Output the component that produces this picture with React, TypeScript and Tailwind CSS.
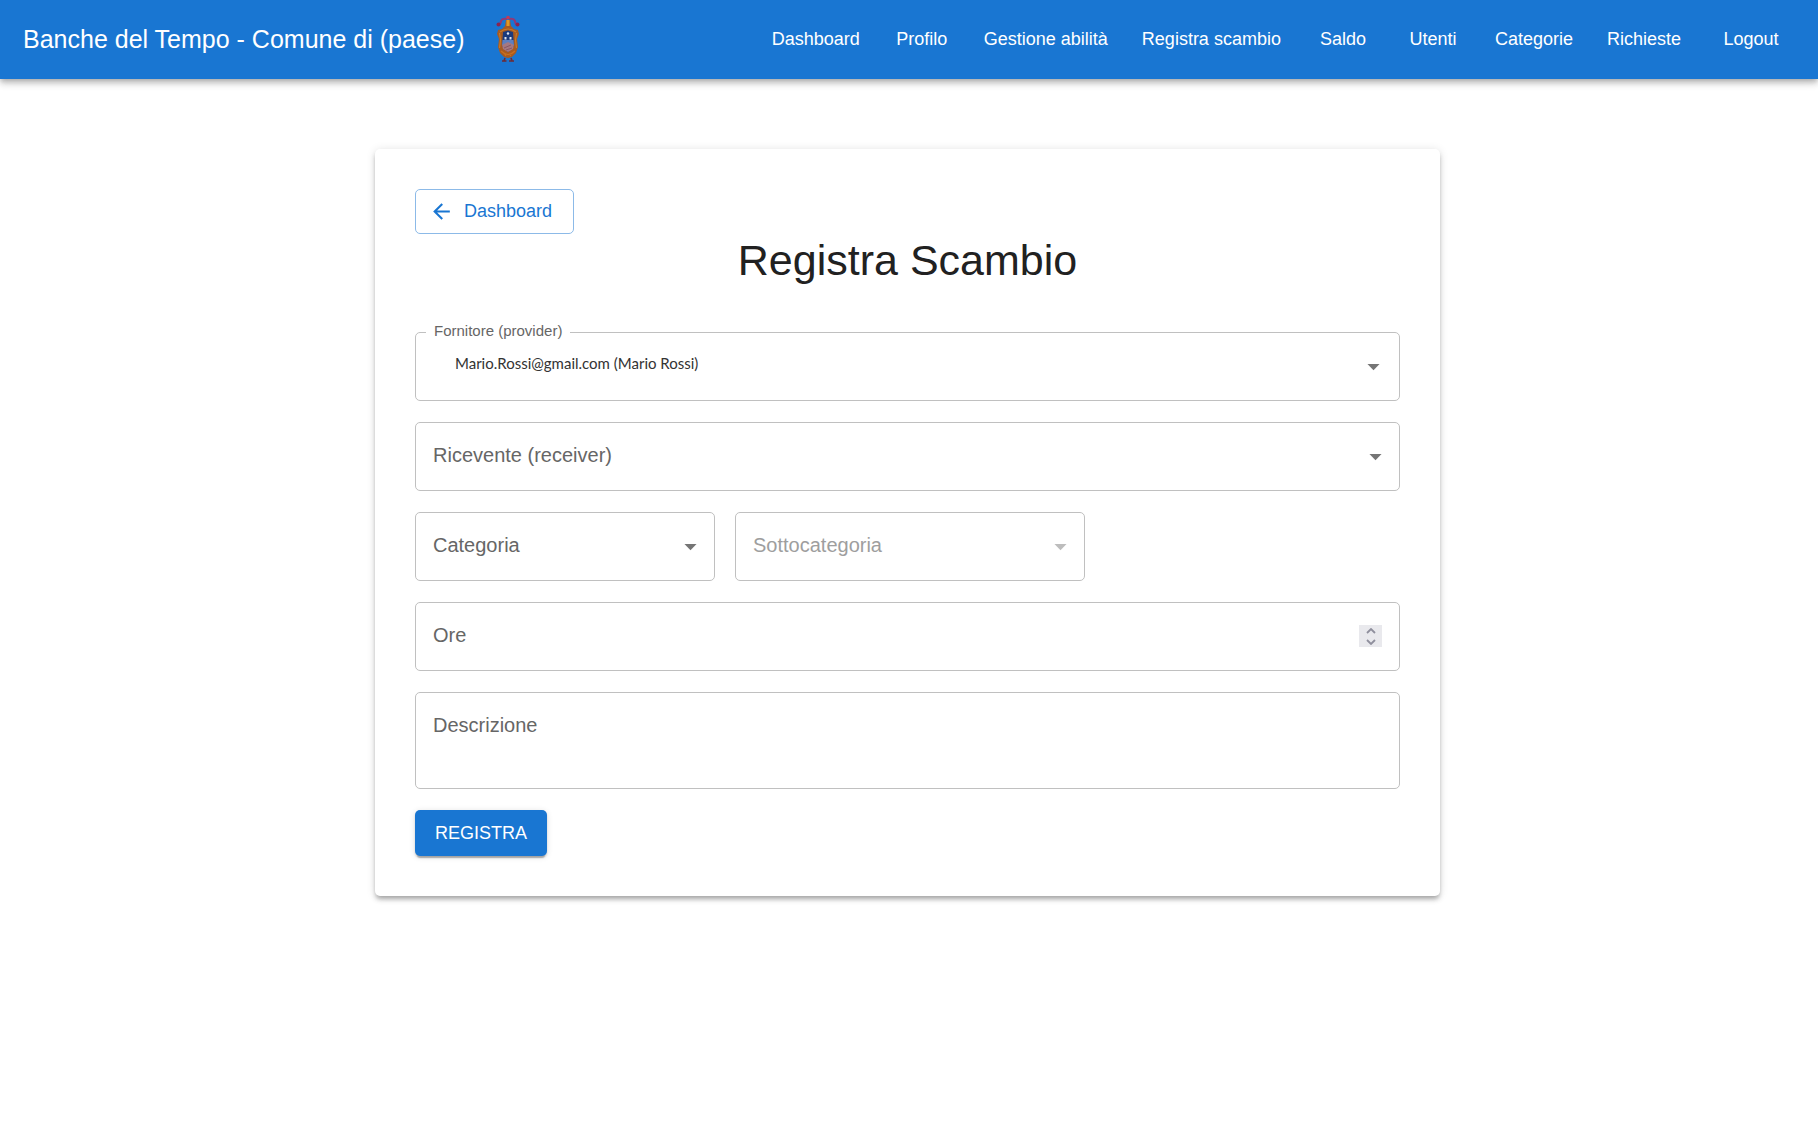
import { useState } from 'react';
import type { ReactNode } from 'react';

const navItems = [
  'Dashboard',
  'Profilo',
  'Gestione abilità',
  'Registra scambio',
  'Saldo',
  'Utenti',
  'Categorie',
  'Richieste',
];

const fieldClass =
  'block w-full rounded-[5px] border border-[#c0c0c0] bg-white text-[20px] leading-7 text-[#212121] outline-none focus:border-[#1976d2]';

// Municipal coat of arms
const Emblem = () => (
  <svg viewBox="0 0 24 48" className="h-12 w-6" role="img" aria-label="Stemma del comune">
    {/* Ribbon */}
    <path d="M11 4 Q6 3 5 6 Q5 9 2 10" stroke="#8f3a78" strokeWidth="2" fill="none" />
    <path d="M13 4 Q18 3 19 6 Q19 9 22 10" stroke="#8f3a78" strokeWidth="2" fill="none" />
    <circle cx="2.500" cy="9.500" r="2" fill="#8a2450" />
    <circle cx="21.500" cy="9.500" r="2" fill="#8a2450" />
    <circle cx="12" cy="2.500" r="1.800" fill="#c43a55" />
    {/* Gilded frame */}
    <path d="M10 5 L14 5 L15 11 L18 14 L22 15 L23 19 L21 24 L22 32 L20 38 L16 42 L12 43 L8 42 L4 38 L2 32 L3 24 L1 19 L2 15 L6 14 L9 11 Z" fill="#a65a22" />
    <path d="M10.500 5 L13.500 5 L13.500 11 L10.500 11 Z" fill="#e09a24" />
    <path d="M4 17 Q12 11 20 17 M3.500 18 L4.500 25 L3.500 33 M20.500 18 L19.500 25 L20.500 33" stroke="#c67a26" strokeWidth="1.200" fill="none" />
    <path d="M5 36 Q12 43 19 36 M8 38 L10 41 M16 38 L14 41" stroke="#c9701f" strokeWidth="1.200" fill="none" />
    {/* Shield */}
    <path d="M7 17 L12 15.500 L17 17 L18 31 L12 37 L6 31 Z" fill="#1b3a7c" />
    <path d="M6.500 25 H17.500 L18 30 H6 Z" fill="#5f7fc0" />
    <path d="M6 30 L12 27 L18 30 L17 34 L12 37 L7 34 Z" fill="#a57882" />
    <path d="M8 33 L15 30 M10 35 L16 33" stroke="#80505f" strokeWidth="0.800" />
    <circle cx="12" cy="18.500" r="1.200" fill="#dfe4ee" />
    <rect x="8.500" y="22" width="2" height="2.500" fill="#dfe4ee" />
    <rect x="13.500" y="22" width="2" height="2.500" fill="#dfe4ee" />
    {/* Foot */}
    <path d="M6 46 H10.500 M13 46 H18 M9 43 L8 46 M15 43 L16 46" stroke="#6e2a35" strokeWidth="1.600" />
  </svg>
);

const DropdownArrow = ({ className }: { className: string }) => (
  <svg viewBox="0 0 24 24" className={`pointer-events-none absolute top-5 size-[29px] ${className}`}>
    <path d="M7 10l5 5 5-5z" />
  </svg>
);

const PlaceholderLabel = ({ htmlFor, disabled, children }: { htmlFor: string; disabled?: boolean; children: ReactNode }) => (
  <label
    htmlFor={htmlFor}
    className={`pointer-events-none absolute left-[18px] top-[19px] text-[20px] leading-7 ${disabled ? 'text-[#9e9e9e]' : 'text-[#666666]'}`}
  >
    {children}
  </label>
);

type SelectFieldProps = {
  id: string;
  label: string;
  options?: string[];
  disabled?: boolean;
  className?: string;
};

function SelectField({ id, label, options = [], disabled, className = '' }: SelectFieldProps) {
  const [value, setValue] = useState('');
  return (
    <div className={`relative ${className}`}>
      <select
        id={id}
        value={value}
        disabled={disabled}
        onChange={(e) => setValue(e.target.value)}
        className={`${fieldClass} h-[69px] appearance-none pl-4 pr-12`}
      >
        <option value="" />
        {options.map((o) => (
          <option key={o}>{o}</option>
        ))}
      </select>
      {!value && (
        <PlaceholderLabel htmlFor={id} disabled={disabled}>
          {label}
        </PlaceholderLabel>
      )}
      <DropdownArrow className={disabled ? 'right-[10px] fill-[#bdbdbd]' : 'right-[10px] fill-[#757575]'} />
    </div>
  );
}

function Header() {
  return (
    <header className="flex min-h-[79px] items-center justify-between bg-[#1976d2] pb-0.5 pl-[23px] pr-7 text-white shadow-[0_2px_5px_-1px_rgba(0,0,0,0.2),0_5px_6px_0_rgba(0,0,0,0.14),0_1px_12px_0_rgba(0,0,0,0.12)]">
      <div className="flex items-center gap-8">
        <span className="text-[25px] leading-10">Banche del Tempo - Comune di (paese)</span>
        <Emblem />
      </div>
      <nav className="flex items-center gap-3 text-[18px] leading-8">
        {navItems.map((item) => (
          <a key={item} href="#" className="min-w-[78px] px-[11px] text-center">
            {item}
          </a>
        ))}
        <button type="button" className="ml-2 min-w-[78px] px-[11px] text-center">
          Logout
        </button>
      </nav>
    </header>
  );
}

export default function App() {
  const [ore, setOre] = useState('');
  const [descrizione, setDescrizione] = useState('');

  const step = (delta: number) => setOre(String(Math.max(0, Number(ore) + delta)));

  return (
    <div className="min-h-screen bg-white font-['Liberation_Sans',Arial,sans-serif]">
      <Header />

      <main className="py-[70px] pr-[3px]">
        <section className="mx-auto max-w-[1065px] rounded-[5px] bg-white p-10 shadow-[0_4px_4px_-2px_rgba(0,0,0,0.2),0_4px_5px_0_rgba(0,0,0,0.14),0_1px_10px_0_rgba(0,0,0,0.12)]">
          <a
            href="#"
            className="flex h-[45px] w-fit items-center gap-[10px] rounded-[5px] border border-[#8cbae8] pl-[13px] pr-[21px] text-[18px] text-[#1976d2]"
          >
            <svg viewBox="0 0 24 24" className="size-[25px] fill-current">
              <path d="M20 11H7.830l5.590-5.590L12 4l-8 8 8 8 1.410-1.410L7.830 13H20v-2z" />
            </svg>
            Dashboard
          </a>

          <h1 className="mb-[46px] text-center text-[43px] leading-[52px] text-[#212121]">Registra Scambio</h1>

          <form className="flex flex-col gap-[21px]" onSubmit={(e) => e.preventDefault()}>
            <div className="relative">
              <select
                id="fornitore"
                className="block h-[69px] w-full appearance-none rounded-[5px] border border-[#c0c0c0] bg-white pb-[6px] pl-[39px] pr-12 font-['Lato',sans-serif] text-[15px] text-[#333333] outline-none focus:border-[#1976d2]"
              >
                <option>Mario.Rossi@gmail.com (Mario Rossi)</option>
              </select>
              <label
                htmlFor="fornitore"
                className="absolute -top-[10px] left-[11px] bg-white px-2 text-[15px] leading-[18px] text-[#666666]"
              >
                Fornitore (provider)
              </label>
              <DropdownArrow className="right-3 fill-[#757575]" />
            </div>

            <SelectField id="ricevente" label="Ricevente (receiver)" />

            <div className="flex flex-wrap gap-5">
              <SelectField id="categoria" label="Categoria" className="w-[300px]" />
              <SelectField id="sottocategoria" label="Sottocategoria" disabled className="w-[350px]" />
            </div>

            <div className="relative">
              <input
                id="ore"
                type="number"
                value={ore}
                onChange={(e) => setOre(e.target.value)}
                className={`${fieldClass} h-[69px] px-[17px] [appearance:textfield] [&::-webkit-inner-spin-button]:appearance-none`}
              />
              {!ore && <PlaceholderLabel htmlFor="ore">Ore</PlaceholderLabel>}
              {/* Stepper */}
              <div className="absolute right-[18px] top-[23px] flex w-[23px] flex-col bg-[#e9e9ed] text-[#8f8f9d]">
                <button type="button" aria-label="Aumenta" onClick={() => step(1)} className="flex h-[11px] items-center justify-center">
                  <svg viewBox="0 0 10 6" className="h-[6px] w-[10px]" fill="none" stroke="currentColor" strokeWidth="1.800">
                    <path d="M1 5l4-4 4 4" />
                  </svg>
                </button>
                <button type="button" aria-label="Diminuisci" onClick={() => step(-1)} className="flex h-[11px] items-center justify-center">
                  <svg viewBox="0 0 10 6" className="h-[6px] w-[10px]" fill="none" stroke="currentColor" strokeWidth="1.800">
                    <path d="M1 1l4 4 4-4" />
                  </svg>
                </button>
              </div>
            </div>

            <div className="relative">
              <textarea
                id="descrizione"
                value={descrizione}
                onChange={(e) => setDescrizione(e.target.value)}
                className={`${fieldClass} h-[97px] resize-none px-[17px] py-[18px]`}
              />
              {!descrizione && <PlaceholderLabel htmlFor="descrizione">Descrizione</PlaceholderLabel>}
            </div>

            <button
              type="submit"
              className="h-[46px] self-start rounded-[5px] bg-[#1976d2] px-5 text-[18px] uppercase text-white shadow-[0_4px_1px_-2px_rgba(0,0,0,0.2),0_2px_2px_0_rgba(0,0,0,0.14),0_1px_6px_0_rgba(0,0,0,0.12)]"
            >
              Registra
            </button>
          </form>
        </section>
      </main>
    </div>
  );
}
